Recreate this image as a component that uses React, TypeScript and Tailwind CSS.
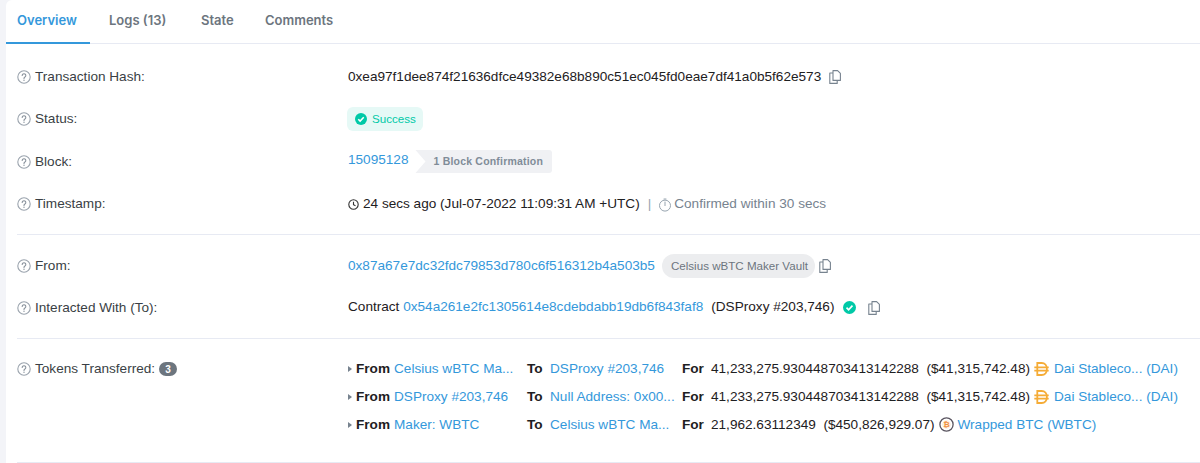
import React from "react";

const Help = () => (
  <svg width="14" height="14" viewBox="0 0 14 14" fill="none" className="shrink-0 mr-[4px]">
    <circle cx="7" cy="7" r="6.2" stroke="#9aa3ad" strokeWidth="1.1" />
    <path d="M5.2 5.5a1.8 1.8 0 1 1 2.7 1.6c-.6.35-.9.7-.9 1.3" stroke="#8a939d" strokeWidth="1.1" strokeLinecap="round" />
    <circle cx="7" cy="10.2" r=".7" fill="#8a939d" />
  </svg>
);

const Copy = () => (
  <svg width="12" height="14" viewBox="0 0 12 14" fill="none" className="shrink-0">
    <path d="M4 .6h4.6L11.4 3.4v7H4z" stroke="#77838f" strokeWidth="1.1" strokeLinejoin="round" />
    <path d="M4 3H.8v10.4h7.4v-3" stroke="#77838f" strokeWidth="1.1" strokeLinejoin="round" />
  </svg>
);

const Check = ({ size = 13 }: { size?: number }) => (
  <svg width={size} height={size} viewBox="0 0 14 14" className="shrink-0">
    <circle cx="7" cy="7" r="7" fill="#00c9a7" />
    <path d="M3.8 7.2l2.2 2.2 4.2-4.4" fill="none" stroke="#fff" strokeWidth="1.8" />
  </svg>
);

const Dai = () => (
  <svg width="15" height="14" viewBox="0 0 15 14" fill="none" className="shrink-0">
    <path d="M3.3 1h4.4c3.1 0 5.2 2.5 5.2 6s-2.1 6-5.2 6H3.3z" stroke="#f5ac37" strokeWidth="1.8" />
    <path d="M.3 5.4h14.4M.3 8.6h14.4" stroke="#f5ac37" strokeWidth="1.6" />
  </svg>
);

const Btc = () => (
  <svg width="15" height="15" viewBox="0 0 15 15" className="shrink-0">
    <circle cx="7.5" cy="7.5" r="6.6" fill="#fff" stroke="#5a5560" strokeWidth="1.3" />
    <circle cx="7.5" cy="7.5" r="4.4" fill="#fdf1e2" />
    <text x="7.5" y="10.4" textAnchor="middle" fontSize="8" fontWeight="700" fill="#f09242" fontFamily="Liberation Sans, sans-serif">₿</text>
  </svg>
);

const Label = ({ children, className = "" }: { children: React.ReactNode; className?: string }) => (
  <div className={"w-[331px] shrink-0 flex items-center text-[#3a3f45] " + className}>
    <Help />
    {children}
  </div>
);

const A = ({ children, className = "" }: { children: React.ReactNode; className?: string }) => (
  <span className={"text-[#3498db] " + className}>{children}</span>
);

const Tab = ({ children, className = "", active = false }: { children: React.ReactNode; className?: string; active?: boolean }) => (
  <div
    className={
      "h-[44px] flex items-center pb-[1px] font-['Inter',sans-serif] text-[13px] font-semibold border-b-2 " +
      (active ? "border-[#3498db] text-[#3498db] " : "border-transparent text-[#6c757e] ") +
      className
    }
  >
    {children}
  </div>
);

const Transfer = ({
  from,
  to,
  amount,
  usd,
  token,
}: {
  from: string;
  to: string;
  amount: string;
  usd: string;
  token: React.ReactNode;
}) => (
  <div className="h-[28px] flex items-center">
    <svg width="4" height="6" viewBox="0 0 4 6" className="shrink-0 mr-[4px]">
      <path d="M0 0l4 3-4 3z" fill="#77838f" />
    </svg>
    <b className="w-[38px] shrink-0 font-bold text-[#1e2022]">From</b>
    <A className="w-[133px] shrink-0 whitespace-nowrap">{from}</A>
    <b className="w-[23px] shrink-0 font-bold text-[#1e2022]">To</b>
    <A className="w-[132px] shrink-0 whitespace-nowrap">{to}</A>
    <b className="w-[29px] shrink-0 font-bold text-[#1e2022]">For</b>
    <span className="whitespace-pre text-[#1e2022]">{amount}  {usd}</span>
    {token}
  </div>
);

export default function App() {
  return (
    <div className="h-[463px] w-[1200px] overflow-hidden bg-[#f3f4f8] pl-[6px] font-['Liberation_Sans',Arial,sans-serif] text-[13.6px] text-[#1e2022]">
      <div className="h-full bg-white rounded-tl-[6px]">
        <div className="h-[44px] flex items-start border-b border-[#e7eaf3]">
          <Tab active className="w-[84px] pl-[11px]">Overview</Tab>
          <Tab className="w-[91px] pl-[19px]">Logs (13)</Tab>
          <Tab className="w-[64px] pl-[20px]">State</Tab>
          <Tab className="pl-[20px]">Comments</Tab>
        </div>

        <div className="pl-[11px] pt-[12px]">
          <div className="h-[42px] flex items-center">
            <Label>Transaction Hash:</Label>
            <span>0xea97f1dee874f21636dfce49382e68b890c51ec045fd0eae7df41a0b5f62e573</span>
            <span className="ml-[8px]">
              <Copy />
            </span>
          </div>
          <div className="h-[42px] flex items-center">
            <Label>Status:</Label>
            <span className="-ml-[1px] h-[24px] pl-[8px] pr-[7px] pb-[1px] flex items-center gap-[5px] rounded-[6px] bg-[#e6f9f6] text-[#00c9a7] text-[11.6px]">
              <Check size={12} />
              Success
            </span>
          </div>
          <div className="h-[44px] flex items-center">
            <Label>Block:</Label>
            <A className="mb-[3px]">15095128</A>
            <span className="ml-[7px] mb-[1px] h-[23px] pl-[18px] pr-[9px] flex items-center rounded-r-[3px] bg-[#f0f1f4] text-[#808c98] text-[10.5px] font-bold tracking-[0.2px] [clip-path:polygon(0_0,100%_0,100%_100%,0_100%,10px_50%)]">
              1 Block Confirmation
            </span>
          </div>
          <div className="h-[41px] flex items-center">
            <Label>Timestamp:</Label>
            <svg width="11" height="11" viewBox="0 0 11 11" fill="none" className="shrink-0 mr-[4px]">
              <circle cx="5.5" cy="5.5" r="4.7" stroke="#333" strokeWidth="1.1" />
              <path d="M5.5 2.8v2.9l2 1.1" stroke="#333" strokeWidth="1.1" />
            </svg>
            <span>24 secs ago (Jul-07-2022 11:09:31 AM +UTC)</span>
            <span className="ml-[8px] mr-[8px] text-[#97a4af]">|</span>
            <svg width="12" height="14" viewBox="0 0 12 14" fill="none" className="shrink-0 mr-[3px]">
              <circle cx="6" cy="7.6" r="5.5" stroke="#97a4af" strokeWidth="1" />
              <path d="M4.6 1h2.8M6 3.6V8" stroke="#97a4af" strokeWidth="1" />
            </svg>
            <span className="text-[#77838f]">Confirmed within 30 secs</span>
          </div>

          <div className="h-[20px] flex items-center -mt-[1px]">
            <div className="h-px w-full bg-[#e7eaf3]" />
          </div>

          <div className="h-[42px] mt-[1px] flex items-center">
            <Label>From:</Label>
            <A>0x87a67e7dc32fdc79853d780c6f516312b4a503b5</A>
            <span className="ml-[7px] h-[24px] pl-[9px] pr-[7px] flex items-center rounded-full bg-[#ecedef] text-[#6c757e] text-[11.6px]">
              Celsius wBTC Maker Vault
            </span>
            <span className="ml-[4px]">
              <Copy />
            </span>
          </div>
          <div className="h-[41px] flex items-center">
            <Label className="pt-[2px]">Interacted With (To):</Label>
            <span>Contract&nbsp;</span>
            <A>0x54a261e2fc1305614e8cdebdabb19db6f843faf8</A>
            <span className="ml-[8px]">(DSProxy #203,746)</span>
            <span className="ml-[9px]">
              <Check />
            </span>
            <span className="ml-[12px]">
              <Copy />
            </span>
          </div>

          <div className="h-[20px] flex items-center">
            <div className="h-px w-full bg-[#e7eaf3]" />
          </div>

          <div className="flex pt-[7px]">
            <div className="w-[331px] shrink-0 h-[28px] flex items-center text-[#3a3f45]">
              <Help />
              Tokens Transferred:
              <span className="ml-[4px] w-[18px] h-[14px] flex items-center justify-center rounded-full bg-[#6c757e] text-white text-[10px] font-bold">
                3
              </span>
            </div>
            <div>
              <Transfer
                from="Celsius wBTC Ma..."
                to="DSProxy #203,746"
                amount="41,233,275.930448703413142288"
                usd="($41,315,742.48)"
                token={
                  <span className="flex items-center ml-[4px] gap-[5px] whitespace-nowrap">
                    <Dai />
                    <A>Dai Stableco... (DAI)</A>
                  </span>
                }
              />
              <Transfer
                from="DSProxy #203,746"
                to="Null Address: 0x00..."
                amount="41,233,275.930448703413142288"
                usd="($41,315,742.48)"
                token={
                  <span className="flex items-center ml-[4px] gap-[5px] whitespace-nowrap">
                    <Dai />
                    <A>Dai Stableco... (DAI)</A>
                  </span>
                }
              />
              <Transfer
                from="Maker: WBTC"
                to="Celsius wBTC Ma..."
                amount="21,962.63112349"
                usd="($450,826,929.07)"
                token={
                  <span className="flex items-center ml-[4px] gap-[4px] whitespace-nowrap">
                    <Btc />
                    <A>Wrapped BTC (WBTC)</A>
                  </span>
                }
              />
            </div>
          </div>
          <div className="h-px w-full bg-[#e7eaf3] mt-[23px]" />
        </div>
      </div>
    </div>
  );
}
